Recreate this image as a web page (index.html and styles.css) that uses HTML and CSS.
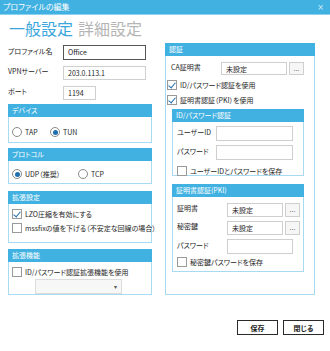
FILE: index.html
```html
<!DOCTYPE html>
<html lang="ja">
<head>
  <meta charset="UTF-8" />
  <title>プロファイルの編集</title>
  <link rel="stylesheet" href="styles.css">
</head>
<body>
  <div class="window">
    <div class="titlebar">
      <span class="title">プロファイルの編集</span>
      <span class="close">×</span>
    </div>

    <div class="tabs">
      <span class="tab active">一般設定</span>
      <span class="tab">詳細設定</span>
    </div>

    <div class="content">
      <div class="col left">
        <div class="field first">
          <label>プロファイル名</label>
          <div class="input wide focus">Office</div>
        </div>
        <div class="field">
          <label>VPNサーバー</label>
          <div class="input wide">203.0.113.1</div>
        </div>
        <div class="field">
          <label>ポート</label>
          <div class="input short">1194</div>
        </div>

        <div class="group device">
          <div class="group-head">デバイス</div>
          <div class="group-body radios">
            <span class="radio"><i class="dot"></i>TAP</span>
            <span class="radio checked"><i class="dot"></i>TUN</span>
          </div>
        </div>

        <div class="group protocol">
          <div class="group-head">プロトコル</div>
          <div class="group-body radios">
            <span class="radio checked"><i class="dot"></i>UDP（推奨）</span>
            <span class="radio"><i class="dot"></i>TCP</span>
          </div>
        </div>

        <div class="group extra">
          <div class="group-head">拡張設定</div>
          <div class="group-body checks">
            <span class="check checked"><i class="box"></i>LZO圧縮を有効にする</span>
            <span class="check"><i class="box"></i>mssfixの値を下げる（不安定な回線の場合）</span>
          </div>
        </div>

        <div class="group plugin">
          <div class="group-head">拡張機能</div>
          <div class="group-body checks">
            <span class="check"><i class="box"></i>ID/パスワード認証拡張機能を使用</span>
            <div class="select"><span class="arrow">▾</span></div>
          </div>
        </div>
      </div>

      <div class="col right">
        <div class="group auth">
          <div class="group-head">認証</div>
          <div class="group-body">
            <div class="field ca">
              <label>CA証明書</label>
              <div class="input file">未設定</div>
              <button class="browse">...</button>
            </div>
            <span class="check checked outer"><i class="box"></i>ID/パスワード認証を使用</span>
            <span class="check checked outer"><i class="box"></i>証明書認証（PKI）を使用</span>

            <div class="group inner idpass">
              <div class="group-head">ID/パスワード認証</div>
              <div class="group-body">
                <div class="field">
                  <label>ユーザーID</label>
                  <div class="input mid"></div>
                </div>
                <div class="field">
                  <label>パスワード</label>
                  <div class="input mid"></div>
                </div>
                <span class="check"><i class="box"></i>ユーザーIDとパスワードを保存</span>
              </div>
            </div>

            <div class="group inner pki">
              <div class="group-head">証明書認証(PKI)</div>
              <div class="group-body">
                <div class="field">
                  <label>証明書</label>
                  <div class="input file">未設定</div>
                  <button class="browse">...</button>
                </div>
                <div class="field">
                  <label>秘密鍵</label>
                  <div class="input file">未設定</div>
                  <button class="browse">...</button>
                </div>
                <div class="field">
                  <label>パスワード</label>
                  <div class="input pw"></div>
                </div>
                <span class="check"><i class="box"></i>秘密鍵パスワードを保存</span>
              </div>
            </div>
          </div>
        </div>
      </div>
    </div>

    <div class="footer">
      <button class="btn">保存</button>
      <button class="btn">閉じる</button>
    </div>
  </div>
</body>
</html>
```

FILE: styles.css
```css
:root {
  --accent: #41b1e1;
  --group-border: #a8dbf2;
  --text: #1e1e1e;
  --field-border: #cfcfcf;
}

* {
  margin: 0;
  padding: 0;
  box-sizing: border-box;
}

body {
  background: #ffffff;
  font-family: "Noto Sans CJK JP", "Liberation Sans", sans-serif;
  font-feature-settings: "palt" 1;
  font-size: 7px;
  color: var(--text);
}

.window {
  width: 330px;
  height: 351px;
  display: flex;
  flex-direction: column;
}

/* Title bar */
.titlebar {
  height: 15px;
  background: var(--accent);
  border-bottom: 1px solid #8fd2ef;
  color: #ffffff;
  display: flex;
  align-items: center;
  justify-content: space-between;
  padding: 0 6px 0 3px;
}

.title {
  font-size: 8px;
  line-height: 14px;
}

.close {
  font-family: "DejaVu Sans", sans-serif;
  font-size: 8px;
  color: #d6eef9;
}

/* Tabs */
.tabs {
  height: 28px;
  padding: 5px 0 0 9px;
  display: flex;
  gap: 5px;
}

.tab {
  font-size: 16px;
  line-height: 17px;
  color: #b5b5b5;
}

.tab.active {
  color: #3aa6db;
}

/* Columns */
.content {
  display: flex;
  gap: 13px;
  padding-left: 8px;
}

.col.left {
  width: 144px;
  display: flex;
  flex-direction: column;
}

.col.right {
  width: 150px;
}

/* Fields */
.field {
  display: flex;
  align-items: center;
  height: 14px;
  margin-top: 6px;
}

.field.first {
  margin-top: 2px;
  height: 15px;
}

.field label {
  width: 55px;
  flex-shrink: 0;
  margin-top: -4px;
}

.input {
  height: 100%;
  border: 1px solid var(--field-border);
  background: #ffffff;
  padding-left: 4px;
  line-height: 12px;
  font-size: 7px;
}

.input.focus {
  border-color: #555555;
}

.input.wide {
  width: 83px;
}

.input.short {
  width: 33px;
}

.browse {
  width: 15px;
  height: 100%;
  margin-left: 2px;
  border: 1px solid var(--field-border);
  background: #f6f6f6;
  font-family: "Liberation Sans", sans-serif;
  font-size: 7px;
  line-height: 8px;
  color: #333333;
}

/* Groups */
.group {
  border: 1px solid var(--group-border);
}

.group-head {
  height: 13px;
  margin: -1px -1px 0;
  background: var(--accent);
  color: #ffffff;
  padding-left: 4px;
  line-height: 12px;
}

.group.device {
  margin-top: 4px;
  height: 39px;
}

.group.protocol {
  margin-top: 5px;
  height: 36px;
}

.group.extra {
  margin-top: 7px;
  height: 52px;
}

.group.plugin {
  margin-top: 6px;
  height: 46px;
}

.radios {
  display: flex;
  padding: 10px 0 0 3px;
}

.protocol .radios {
  padding-top: 8px;
}

.radio {
  display: flex;
  align-items: center;
  gap: 3px;
  height: 10px;
}

.device .radio:first-child {
  width: 38px;
}

.protocol .radio:first-child {
  width: 66px;
}

.dot {
  width: 10px;
  height: 10px;
  border: 1px solid #8a8a8a;
  border-radius: 50%;
  background: #ffffff;
  display: flex;
  align-items: center;
  justify-content: center;
}

.radio.checked .dot::after {
  content: '';
  width: 5px;
  height: 5px;
  border-radius: 50%;
  background: #1d6fae;
}

.checks {
  display: flex;
  flex-direction: column;
  gap: 4px;
  padding: 5px 0 0 3px;
}

.plugin .checks {
  gap: 2px;
}

.check {
  display: flex;
  align-items: center;
  gap: 3px;
  height: 10px;
  white-space: nowrap;
}

.box {
  width: 10px;
  height: 10px;
  border: 1px solid #9a9a9a;
  background: #ffffff;
  position: relative;
  flex-shrink: 0;
}

.check.checked .box::after {
  content: '';
  position: absolute;
  left: 2px;
  top: 0px;
  width: 3px;
  height: 6px;
  border: solid #1d6fae;
  border-width: 0 1.5px 1.5px 0;
  transform: rotate(40deg);
}

.select {
  margin-left: 23px;
  width: 87px;
  height: 15px;
  border: 1px solid #dcdcdc;
  background: #f7f7f7;
  display: flex;
  justify-content: flex-end;
  align-items: center;
  padding-right: 4px;
}

.arrow {
  font-family: "DejaVu Sans", sans-serif;
  font-size: 6px;
  color: #555555;
}

/* Authentication */
.group.auth {
  height: 252px;
}

.auth > .group-body {
  padding-left: 1px;
}

.auth .ca {
  margin-top: 6px;
  height: 13px;
  padding-left: 4px;
}

.auth .ca label {
  width: 50px;
}

.input.file {
  width: 56px;
}

.auth .ca .input.file {
  width: 66px;
}

.check.outer {
  margin-top: 5px;
}

.group.inner {
  margin: 4px 10px 0 5px;
}

.group.idpass {
  height: 67px;
}

.group.pki {
  margin-top: 8px;
  height: 88px;
}

.inner .group-body {
  padding-left: 4px;
}

.inner .field {
  margin-top: 4px;
}

.idpass .field {
  height: 15px;
}

.idpass .field label {
  width: 39px;
}

.input.mid {
  width: 77px;
}

.pki .field label {
  width: 50px;
}

.pki .field:first-child {
  margin-top: 6px;
}

.pki .field:nth-child(3) {
  height: 15px;
}

.input.pw {
  width: 66px;
}

.inner .check {
  margin-top: 6px;
}

.pki .check {
  margin-top: 3px;
}

/* Footer */
.footer {
  display: flex;
  justify-content: flex-end;
  gap: 5px;
  padding-right: 6px;
  margin-top: 25px;
}

.btn {
  width: 41px;
  height: 15px;
  border: 1.5px solid #2a2a2a;
  background: #ffffff;
  font-family: "Noto Sans CJK JP", sans-serif;
  font-feature-settings: "palt" 1;
  font-size: 7px;
  font-weight: bold;
  color: #222222;
}
```
